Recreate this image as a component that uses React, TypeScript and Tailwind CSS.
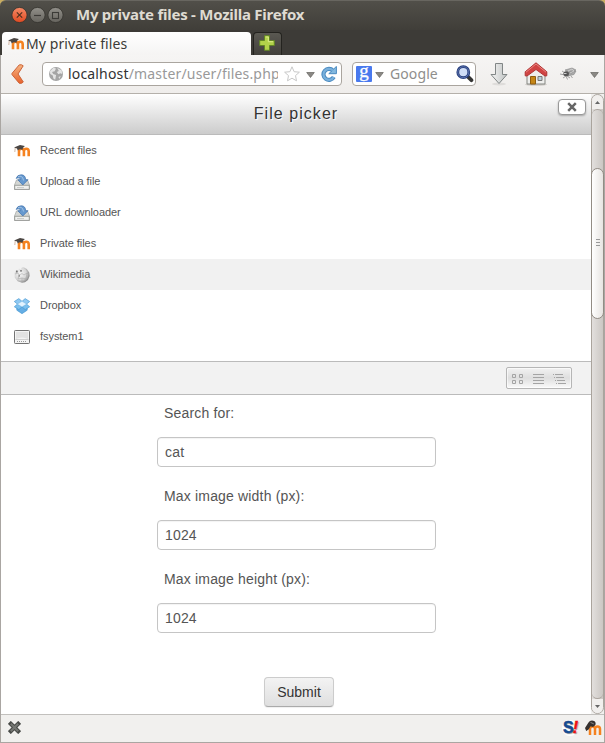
import React from "react";

const ubuntu = "font-['Noto_Sans','Open_Sans',sans-serif]";

function MoodleIcon({ className = "" }: { className?: string }) {
  return (
    <svg className={`h-4 w-4 shrink-0 ${className}`} viewBox="0 0 16 16">
      <path d="M5 13.3V8.2Q5 5.7 7.4 5.7Q9.9 5.7 9.9 8.2V13.3M9.9 8.2Q9.9 5.7 12.3 5.7Q14.7 5.7 14.7 8.2V13.3" fill="none" stroke="#f58220" strokeWidth="2.6" />
      <path d="M0 4.6L6 2L10.9 2.9L8.9 4.9L8.6 6.8Q5.8 5.2 3.7 7.4L3 5.6Z" fill="#4b4643" />
      <path d="M1.2 5L.8 9" stroke="#c9a68c" strokeWidth=".8" />
    </svg>
  );
}

function UploadIcon() {
  return (
    <svg className="h-4 w-4" viewBox="0 0 16 16">
      <path d="M2.5 6H13.5L15.5 11V15.5H.5V11Z" fill="#d4d6d3" stroke="#a4a6a3" strokeWidth=".7" />
      <path d="M.7 11.3H15.3V15.4H.7Z" fill="#f0f0ee" stroke="#8e908d" strokeWidth=".8" />
      <path d="M3 13.6H10" stroke="#c6c8c5" strokeWidth="1" />
      <path d="M2.2 4.4Q3.2.8 7.2.8Q11.4 .8 11.7 5.7H14L8.8 11L3.8 5.7H6.4Q6.4 4.3 5.2 4Q4 3.6 2.2 4.4Z" fill="#6699cf" stroke="#3f70aa" strokeWidth=".7" />
      <path d="M4 2.8Q8.2.5 9.6 6.5" fill="none" stroke="#a2c3e5" strokeWidth="1" />
    </svg>
  );
}

function WikiIcon() {
  return (
    <svg className="h-4 w-4" viewBox="0 0 16 16">
      <defs>
        <radialGradient id="wiki" cx=".38" cy=".4" r=".62">
          <stop stopColor="#f6f6f6" />
          <stop offset=".65" stopColor="#d8d8d8" />
          <stop offset="1" stopColor="#8e8e8e" />
        </radialGradient>
      </defs>
      <path d="M2 3.2L4.3 3.6L5 1.4L6.4 2.4L8 .5L10 .6L12.8 1.9L15.2 5.4L15.6 9L14 13L11 15.2L8 15.7L3.7 14.2L.8 10.5L.6 6Z" fill="url(#wiki)" />
      <path d="M1 7L4 6L5 8L8 6.6L10 8L13 6L15 7M5 8L4 12L8 11L8 15M8 11L12 12L13 6" fill="none" stroke="#aaa" strokeWidth=".6" />
      <path d="M2 3.4L4 3.7L3.4 5.4L2 5.4Z M6 3.2H8V4.6H6Z M4.5 8.6L6 8.3V9.6H4.7Z" fill="#777" />
    </svg>
  );
}

function DropboxIcon() {
  return (
    <svg className="h-4 w-4" viewBox="0 0 16 16" stroke="#3f93cf" strokeWidth=".6" strokeLinejoin="round">
      <path d="M2.8 8.7L8 5.2L13.2 8.7V12.2L8 15.7L2.8 12.2Z" fill="#65aee5" />
      <path d="M.3 3.5L4.8.6L8 3.3L3.4 6.1Z M15.7 3.5L11.2.6L8 3.3L12.6 6.1Z" fill="#8fc9f3" />
      <path d="M.3 8.8L3.4 6.1L8 8.9L4.8 11.6Z M15.7 8.8L12.6 6.1L8 8.9L11.2 11.6Z" fill="#7cc0ee" />
      <path d="M3.4 6.1L8 3.3L12.6 6.1L8 8.9Z" fill="#e3f3ff" stroke="#8cc5ec" />
    </svg>
  );
}

function DriveIcon() {
  return (
    <svg className="h-4 w-4" viewBox="0 0 16 16">
      <rect x=".5" y="1.5" width="15" height="13" rx=".8" fill="#f4f4f4" stroke="#737373" />
      <path d="M2 10V3H14V10Q8 7 2 10" fill="#e2e2e2" />
      <path d="M1.5 10.5H14.5" stroke="#d0d0d0" />
      <path d="M3 12.5H13" stroke="#999" strokeDasharray="1 1" />
    </svg>
  );
}

function Triangle({ className = "" }: { className?: string }) {
  return (
    <svg className={`h-[6px] w-[9px] shrink-0 ${className}`} viewBox="0 0 9 6">
      <path d="M.7.5H8.3L4.5 5.5Z" fill="#8a8884" stroke="#666460" strokeWidth=".7" />
    </svg>
  );
}

function TitleBar() {
  return (
    <div className="flex h-[30px] shrink-0 items-center rounded-t-[6px] border-t border-[#686660] bg-linear-to-b from-[#514f49] to-[#403e39] pb-px pl-[11px]">
      <svg className="h-[18px] w-[54px]" viewBox="0 0 54 18">
        <defs>
          <linearGradient id="closeBtn" x2="0" y2="1">
            <stop stopColor="#f68a66" />
            <stop offset="1" stopColor="#df4921" />
          </linearGradient>
          <linearGradient id="winBtn" x2="0" y2="1">
            <stop stopColor="#92908a" />
            <stop offset="1" stopColor="#65635d" />
          </linearGradient>
        </defs>
        <circle cx="8.5" cy="9" r="7.6" fill="url(#closeBtn)" stroke="#34322d" strokeWidth=".8" />
        <circle cx="26.5" cy="9" r="7.6" fill="url(#winBtn)" stroke="#34322d" strokeWidth=".8" />
        <circle cx="44.5" cy="9" r="7.6" fill="url(#winBtn)" stroke="#34322d" strokeWidth=".8" />
        <path d="M5.8 6.3L11.2 11.7M11.2 6.3L5.8 11.7" stroke="#51301f" strokeWidth="1.2" />
        <path d="M23 9.5H30" stroke="#3c3b37" strokeWidth="1.2" />
        <rect x="41.5" y="6.5" width="6" height="6" fill="none" stroke="#3c3b37" strokeWidth="1.1" />
      </svg>
      <span className={`${ubuntu} -mt-[2px] ml-[11px] whitespace-nowrap text-[15px] font-bold leading-5 tracking-[-0.25px] text-[#dfdbd2]`}>My private files - Mozilla Firefox</span>
    </div>
  );
}

function TabStrip() {
  return (
    <div className="flex h-[25px] shrink-0 items-end bg-[#3d3b37] pl-[2px]">
      <div className="flex h-[23px] w-[249px] items-center rounded-t-[4px] bg-linear-to-b from-white to-[#f5f4f3] pl-[6px]">
        <MoodleIcon />
        <span className={`${ubuntu} ml-[2px] whitespace-nowrap text-[14px] leading-5 tracking-[0.1px] text-[#3c3b37]`}>My private files</span>
      </div>
      <div className="ml-[2px] flex h-[23px] w-[29px] items-center justify-center rounded-t-[4px] border border-b-0 border-[#24231f] bg-linear-to-b from-[#5a5852] to-[#42403b] pb-[2px] pr-px">
        <svg className="h-4 w-4" viewBox="0 0 16 16">
          <path d="M5.5.7H10.5V5.5H15.3V10.5H10.5V15.3H5.5V10.5H.7V5.5H5.5Z" fill="#b2d24a" stroke="#628526" />
          <path d="M6.7 2H9.3V6.7H14" fill="none" stroke="#dcea8b" />
        </svg>
      </div>
    </div>
  );
}

function Toolbar() {
  return (
    <div className="flex h-[39px] shrink-0 items-center border-b border-[#b4b0aa] bg-linear-to-b from-[#f6f5f4] to-[#efedeb] pl-[10px]">
      <svg className="h-[20px] w-[14px]" viewBox="0 0 14 20">
        <defs>
          <linearGradient id="back" x2="0" y2="1">
            <stop stopColor="#f6b481" />
            <stop offset="1" stopColor="#e8622c" />
          </linearGradient>
        </defs>
        <path d="M8.2 .9Q10.5 .1 12.2 1.8L7 10L12.3 18Q10.8 20 8.2 19.2L1 10.6V9.4Z" fill="url(#back)" stroke="#cb6236" strokeLinejoin="round" />
      </svg>
      <div className="ml-[17px] flex h-6 w-[300px] shrink-0 items-center rounded-[4px] border border-[#aaa59f] bg-white pl-[5px]">
        <svg className="h-4 w-4 shrink-0" viewBox="0 0 16 16">
          <circle cx="8" cy="8" r="7" fill="#a5a5a5" />
          <path d="M2 5L5.5 1.7L8 2.6L6.7 5.2L4 6.1L5.2 8.1L8.1 9L7.2 13.7L5.4 12.6L4.8 9.5L2.2 8ZM9.2 2L13.7 4.2L14.2 8L12.3 7.3L10.4 8.3L8.8 6.1L10.8 5ZM10.5 11L12.8 10L11.4 13Z" fill="#e4e4e4" />
        </svg>
        <div className={`${ubuntu} ml-[4px] w-[210px] overflow-hidden whitespace-nowrap text-[14px] leading-5 tracking-[0.17px] text-[#999]`}>
          <span className="text-[#333]">localhost</span>/master/user/files.php
        </div>
        <svg className="ml-[6px] h-4 w-4 shrink-0" viewBox="0 0 16 16">
          <path d="M8 .8L10.1 5.7L15.4 6.2L11.5 9.6L12.5 14.8L8 12.2L3.5 14.8L4.5 9.6L.6 6.2L5.9 5.7Z" fill="#fff" stroke="#c8c8c8" />
        </svg>
        <Triangle className="ml-[6px] mt-px" />
        <svg className="ml-[6px] h-4 w-4 shrink-0" viewBox="0 0 16 16">
          <path d="M12 4.6A5.5 5.5 0 1 0 12.8 11" fill="none" stroke="#4b8bc1" strokeWidth="4.2" />
          <path d="M7.8 7.7H15.4V.4L12.8 2.9L10.9 4.9Z" fill="#82b8df" stroke="#4b8bc1" />
          <path d="M12 4.6A5.5 5.5 0 1 0 12.8 11" fill="none" stroke="#79b0dc" strokeWidth="2.2" />
        </svg>
      </div>
      <div className="ml-[10px] flex h-6 w-[124px] shrink-0 items-center rounded-[4px] border border-[#aaa59f] bg-white pl-[3px]">
        <div className="flex h-4 w-4 items-center justify-center rounded-[1px] bg-[#4979ee]">
          <span className="-mt-[6px] font-['Liberation_Serif',serif] text-[19px] leading-4 text-white [-webkit-text-stroke:0.3px_white]">g</span>
        </div>
        <Triangle className="ml-[3px] mt-px" />
        <span className={`${ubuntu} ml-[6px] w-[58px] text-[14px] leading-5 tracking-[0.1px] text-[#8f8e8c]`}>Google</span>
        <svg className="ml-[8px] h-[18px] w-[18px] shrink-0" viewBox="0 0 18 18">
          <path d="M11.6 11.4L15.4 15.2" stroke="#343434" strokeWidth="3.8" strokeLinecap="round" />
          <circle cx="7.3" cy="7.2" r="5.5" fill="#d0def7" stroke="#263e7d" strokeWidth="2.8" />
          <circle cx="7.3" cy="7.2" r="5.5" fill="none" stroke="#697fb8" strokeWidth=".8" />
        </svg>
      </div>
      <svg className="ml-[14px] h-6 w-[18px] shrink-0" viewBox="0 0 18 24">
        <defs><linearGradient id="dl" x2="1"><stop stopColor="#f6f6f5" /><stop offset="1" stopColor="#bec2c2" /></linearGradient></defs>
        <ellipse cx="9" cy="22" rx="7" ry="1.5" fill="#dedcda" />
        <path d="M5.5 1.5H12.5V12.5H17L9 21.5L1 12.5H5.5Z" fill="url(#dl)" stroke="#818686" strokeLinejoin="round" />
      </svg>
      <svg className="ml-[16px] h-6 w-6 shrink-0" viewBox="0 0 24 24">
        <ellipse cx="12" cy="22.6" rx="11" ry="1.1" fill="#cecac7" />
        <path d="M3 11L12 4L21 11V22H3Z" fill="#eeeeec" stroke="#858782" />
        <path d="M6.5 14.5H11.5V22H6.5Z" fill="#c58616" stroke="#8f5d0e" />
        <path d="M14 14.5H18V18.5H14Z" fill="#b6cfda" stroke="#777" />
        <path d="M1.2 9.8L12 .8L22.8 9.8V13.8L21 14L12 7.5L3 14L1.2 13.8Z" fill="#d04444" stroke="#b03535" strokeLinejoin="round" />
        <path d="M2 10.2L12 2L22 10.2" fill="none" stroke="#e98580" />
      </svg>
      <svg className="ml-[12px] h-5 w-5 shrink-0" viewBox="0 0 20 20">
        <path d="M2 7L5 9M0 10L5 11M3 14L6 12L7.5 15.5M7 12L10 14M11 12L12.5 14" stroke="#999" fill="none" strokeWidth=".9" />
        <path d="M5 6L12 4L16 6L10.5 9.7ZM9 8L16 7L14 10.5L8 12Z" fill="#aaa" stroke="#888" strokeWidth=".6" />
        <ellipse cx="6.2" cy="9.8" rx="2.8" ry="2.5" fill="#555" />
        <path d="M8 7L12 5L14 7L10 9M4 9.5H6.5" stroke="#ccc" fill="none" />
      </svg>
      <Triangle className="ml-[10px] mt-[2px]" />
    </div>
  );
}

const repositories = [
  { name: "Recent files", icon: <MoodleIcon /> },
  { name: "Upload a file", icon: <UploadIcon /> },
  { name: "URL downloader", icon: <UploadIcon /> },
  { name: "Private files", icon: <MoodleIcon /> },
  { name: "Wikimedia", icon: <WikiIcon />, selected: true },
  { name: "Dropbox", icon: <DropboxIcon /> },
  { name: "fsystem1", icon: <DriveIcon /> },
];

function Field({ label, value }: { label: string; value: string }) {
  return (
    <label className="block h-[83px] w-[279px]">
      <span className="block h-[34px] pl-[7px] leading-5 tracking-[0.17px]">{label}</span>
      <input className="block h-[30px] w-full rounded-[4px] border border-[#c5c5c5] bg-white px-[7px] tracking-[0.17px] text-[#555] shadow-[inset_0_1px_1px_#0000000d] outline-none" defaultValue={value} />
    </label>
  );
}

function Picker() {
  return (
    <main className="flex min-w-0 flex-1 flex-col bg-white font-['Liberation_Sans',Arial,sans-serif] text-[14px] text-[#555]">
      <header className="relative flex h-[41px] shrink-0 items-center justify-center border-b border-[#bbb] bg-linear-to-b from-white to-[#ccc] text-[16px] tracking-[1.05px] text-[#333] [text-shadow:1px_1px_1px_#fff]">
        <span>File picker</span>
        <button aria-label="Close" className="absolute right-[5px] top-[5px] flex h-4 w-[28px] items-center justify-center rounded-[4px] border border-[#999] bg-white shadow-[0_1px_2px_#0004]">
          <svg className="h-[10px] w-[10px]" viewBox="0 0 10 10"><path d="M1.2 1.2L8.8 8.8M8.8 1.2L1.2 8.8" stroke="#666" strokeWidth="2.5" /></svg>
        </button>
      </header>
      <div className="h-[226px] shrink-0">
        {repositories.map((item) => (
          <div key={item.name} className={`flex h-[31px] items-center pl-[13px] text-[11px] tracking-[-0.06px] ${item.selected ? "bg-[#f1f1f1]" : ""}`}>
            {item.icon}<span className="ml-[10px]">{item.name}</span>
          </div>
        ))}
      </div>
      <div className="flex h-[34px] shrink-0 items-center justify-end border-y border-[#bbb] bg-[#f2f2f2] pr-[19px]">
        <div className="flex h-[22px] w-[66px] items-center justify-center rounded-[2px] border border-[#b6b6b6] bg-linear-to-b from-[#f2f2f2] via-[#dedede] to-[#fafafa] shadow-[inset_0_0_0_1px_#fff9]">
          <svg className="h-5 w-16 shrink-0" viewBox="0 0 64 20" fill="none" stroke="#a4a4a4">
            <path d="M5.5 6.5H8.5V9.5H5.5ZM12.5 6.5H15.5V9.5H12.5ZM5.5 12.5H8.5V15.5H5.5ZM12.5 12.5H15.5V15.5H12.5Z" />
            <path d="M26 6.5H37M26 9.5H37M26 12.5H37M26 15.5H37M46 6.5H47M48 6.5H56M47 9.5H48M49 9.5H57M48 12.5H49M50 12.5H58M49 15.5H50M51 15.5H59" />
          </svg>
        </div>
      </div>
      <form className="flex min-h-0 flex-1 flex-col pl-[156px] pt-2" onSubmit={(event) => event.preventDefault()}>
        <Field label="Search for:" value="cat" />
        <Field label="Max image width (px):" value="1024" />
        <Field label="Max image height (px):" value="1024" />
        <button className="ml-[107px] mt-[25px] h-[30px] w-[70px] rounded-[4px] border border-[#ccc] border-b-[#aaa] bg-linear-to-b from-[#f3f3f3] to-[#dfdfdf] text-[#333] shadow-[0_1px_1px_#0001]">Submit</button>
      </form>
    </main>
  );
}

function Scrollbar() {
  return (
    <div className="flex w-[13px] shrink-0 flex-col rounded-[7px] border border-[#aaa49d] bg-linear-to-r from-[#e2dfdd] to-[#cbc7c3]">
      <div className="flex h-[14px] items-center justify-center rounded-t-[6px] bg-[#f1efed]"><svg width="5" height="3" viewBox="0 0 5 3"><path d="M0 3L2.5 0L5 3Z" fill="#666" /></svg></div>
      <div className="h-[59px] rounded-t-[6px] border-t border-[#aaa49d]" />
      <div className="-mx-px flex h-[151px] flex-col items-center justify-center gap-[2px] rounded-[7px] border border-[#928c84] bg-linear-to-r from-white to-[#e7e4e1] pb-[2px]">
        <i className="h-px w-[4px] bg-[#999]" /><i className="h-px w-[4px] bg-[#999]" /><i className="h-px w-[4px] bg-[#999]" />
      </div>
      <div className="flex-1 rounded-b-[6px] border-b border-[#aaa49d]" />
      <div className="flex h-[14px] items-center justify-center rounded-b-[6px] bg-[#f1efed]"><svg width="5" height="3" viewBox="0 0 5 3"><path d="M0 0H5L2.5 3Z" fill="#666" /></svg></div>
    </div>
  );
}

export default function App() {
  return (
    <div className="flex h-[743px] w-[605px] flex-col overflow-hidden bg-[#c9ad61]">
      <TitleBar />
      <TabStrip />
      <div className="flex min-h-0 flex-1 flex-col border-x border-b border-[#aaa6a2] bg-[#f1f0ee]">
        <Toolbar />
        <div className="flex h-[620px] shrink-0"><Picker /><Scrollbar /></div>
        <footer className="flex flex-1 items-center border-t border-[#c2c0bd] bg-[#f1f0ee] pl-[7px]">
          <svg className="-mt-[2px] h-[13px] w-[13px]" viewBox="0 0 14 14"><path d="M3 3L11 11M11 3L3 11" stroke="#484a47" strokeWidth="4.4" strokeLinecap="square" /><path d="M3 3L11 11M11 3L3 11" stroke="#747672" strokeWidth="2.2" /></svg>
          <div className="-mt-[2px] ml-auto flex h-[16px] w-4 items-center justify-center rounded-full bg-white font-['Liberation_Sans',Arial,sans-serif] text-[16px] font-bold leading-4 tracking-[-1px] text-[#164b92] [-webkit-text-stroke:0.5px] [text-shadow:1px_1px_1px_#999]">S<span className="italic text-[#ee1111]">!</span></div>
          <svg className="-mt-[2px] ml-[6px] mr-[2px] h-[18px] w-[18px]" viewBox="0 0 18 18">
            <path d="M6 16V10Q6 7.4 8.5 7.4Q11 7.4 11 10V16M11 10Q11 7.4 13.5 7.4Q16 7.4 16 10V16" fill="none" stroke="#f58220" strokeWidth="2.5" />
            <path d="M1 9L4.5 3.6Q6 1 9.3 1.7Q12.4 2.6 11.4 6L9 8L6.6 7.2L4.6 10.5L2.2 12Z" fill="#35312f" />
            <path d="M6.5 3.4L9.8 4.9" stroke="#888" />
          </svg>
        </footer>
      </div>
    </div>
  );
}
